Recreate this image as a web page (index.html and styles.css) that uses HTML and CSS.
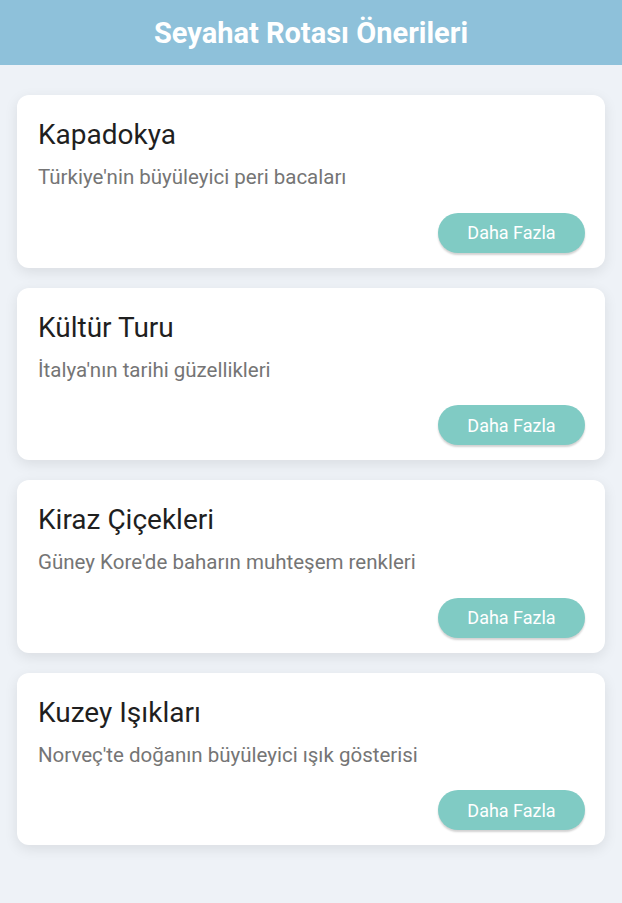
FILE: index.html
```html
<!DOCTYPE html>
<html lang="tr">
<head>
<meta charset="utf-8">
<title>Seyahat Rotası Önerileri</title>
<link rel="stylesheet" href="styles.css">
</head>
<body>
<header class="app-bar">
  <h1 class="app-title">Seyahat Rotası Önerileri</h1>
</header>
<main class="list">
  <article class="card">
    <h2 class="card-title">Kapadokya</h2>
    <p class="card-desc">Türkiye'nin büyüleyici peri bacaları</p>
    <div class="card-actions"><button class="btn">Daha Fazla</button></div>
  </article>
  <article class="card">
    <h2 class="card-title">Kültür Turu</h2>
    <p class="card-desc">İtalya'nın tarihi güzellikleri</p>
    <div class="card-actions"><button class="btn">Daha Fazla</button></div>
  </article>
  <article class="card">
    <h2 class="card-title">Kiraz Çiçekleri</h2>
    <p class="card-desc">Güney Kore'de baharın muhteşem renkleri</p>
    <div class="card-actions"><button class="btn">Daha Fazla</button></div>
  </article>
  <article class="card">
    <h2 class="card-title">Kuzey Işıkları</h2>
    <p class="card-desc">Norveç'te doğanın büyüleyici ışık gösterisi</p>
    <div class="card-actions"><button class="btn">Daha Fazla</button></div>
  </article>
</main>
</body>
</html>
```
FILE: styles.css
```css
* { box-sizing: border-box; }
html, body {
  margin: 0;
  padding: 0;
  background: #eef2f7;
  font-family: Roboto, "Noto Sans", sans-serif;
}
.app-bar {
  height: 65px;
  background: #8ec1da;
  display: flex;
  align-items: center;
  justify-content: center;
}
.app-title {
  margin: 0;
  color: #ffffff;
  font-size: 29px;
  font-weight: 700;
  line-height: 1;
  padding-top: 1px;
}
.list {
  padding: 30px 17px 40px;
  display: flex;
  flex-direction: column;
  gap: 20px;
}
.card {
  background: #ffffff;
  border-radius: 12px;
  box-shadow: 0 4px 14px rgba(0, 0, 0, 0.09);
  padding: 23px 20px 15px 21px;
  height: 172.5px;
  display: flex;
  flex-direction: column;
}
.card-title {
  margin: 0;
  font-size: 28px;
  font-weight: 400;
  line-height: 33px;
  color: #1f1f1f;
}
.card-desc {
  margin: 14px 0 0;
  font-size: 20.5px;
  line-height: 24px;
  color: #757575;
}
.card-actions {
  margin-top: auto;
  display: flex;
  justify-content: flex-end;
}
.btn {
  height: 40px;
  width: 147px;
  border: none;
  border-radius: 20px;
  background: #80cbc4;
  color: #ffffff;
  font-family: Roboto, "Noto Sans", sans-serif;
  font-size: 18px;
  font-weight: 400;
  box-shadow: 0 2px 2px rgba(0, 0, 0, 0.18);
  padding: 0;
  cursor: pointer;
}
```
